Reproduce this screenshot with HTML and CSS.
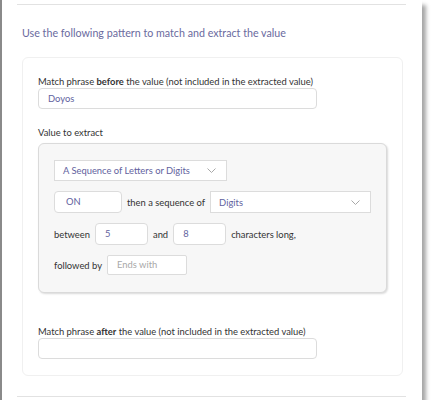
FILE: index.html
```html
<!DOCTYPE html>
<html lang="en">
<head>
    <meta charset="UTF-8">
    <meta name="viewport" content="width=device-width, initial-scale=1.0">
    <title>Extract Value Pattern</title>
    <link rel="stylesheet" href="styles.css">
</head>
<body>
    <div class="window">
        <div class="rule"></div>
        <h2 class="heading">Use the following pattern to match and extract the value</h2>
        <div class="card">
            <label class="field-label">Match phrase <b>before</b> the value (not included in the extracted value)</label>
            <div class="input wide">Doyos</div>

            <label class="field-label extract-label">Value to extract</label>
            <div class="extract-box">
                <div class="row">
                    <div class="select type-select">
                        <span>A Sequence of Letters or Digits</span>
                        <svg class="chevron" width="9" height="5" viewBox="0 0 9 5"><path d="M0.5 0.5 L4.5 4.5 L8.5 0.5" fill="none" stroke="#a8a8a8" stroke-width="1"/></svg>
                    </div>
                </div>
                <div class="row">
                    <div class="input tall prefix">ON</div>
                    <span class="row-text">then a sequence of</span>
                    <div class="select seq-select">
                        <span>Digits</span>
                        <svg class="chevron" width="9" height="5" viewBox="0 0 9 5"><path d="M0.5 0.5 L4.5 4.5 L8.5 0.5" fill="none" stroke="#a8a8a8" stroke-width="1"/></svg>
                    </div>
                </div>
                <div class="row">
                    <span class="row-text">between</span>
                    <div class="input tall num">5</div>
                    <span class="row-text">and</span>
                    <div class="input tall num">8</div>
                    <span class="row-text">characters long,</span>
                </div>
                <div class="row">
                    <span class="row-text">followed by</span>
                    <div class="input ends placeholder">Ends with</div>
                </div>
            </div>

            <label class="field-label after-label">Match phrase <b>after</b> the value (not included in the extracted value)</label>
            <div class="input wide"></div>
        </div>
        <div class="rule bottom"></div>
    </div>
</body>
</html>
```

FILE: styles.css
```css
body {
    margin: 0;
    background-color: #fff;
    font-family: Lato, 'Noto Sans', sans-serif;
    color: #333;
}

.window {
    width: 422px;
    height: 400px;
    border-left: 2px solid #8a8a8a;
    background-color: #fff;
    box-shadow: 4px 5px 4px rgba(0, 0, 0, 0.35);
    padding-top: 4px;
    box-sizing: border-box;
}

.rule {
    height: 1px;
    background-color: #e2e2e2;
    margin: 0 16px 0 15px;
}

.rule.bottom {
    margin-top: 20px;
}

.heading {
    margin: 19px 0 15px 20px;
    font-size: 10.7px;
    line-height: 18px;
    font-weight: normal;
    color: #6a6a9e;
    white-space: nowrap;
}

.card {
    margin-left: 20px;
    width: 381px;
    box-sizing: border-box;
    border: 1px solid #f0f0f0;
    border-radius: 6px;
    padding: 17px 16px 16px 15px;
}

.field-label {
    display: block;
    font-size: 9.4px;
    line-height: 13px;
    color: #333;
    white-space: nowrap;
}

.field-label b {
    font-weight: bold;
}

.extract-label {
    margin-top: 17px;
}

.after-label {
    margin-top: 32px;
}

.input {
    box-sizing: border-box;
    height: 21px;
    border: 1px solid #dcdcdc;
    border-radius: 4px;
    background-color: #fff;
    font-size: 9.4px;
    line-height: 19px;
    padding-left: 9px;
    color: #62629e;
    white-space: nowrap;
}

.input.wide {
    width: 279px;
}

.input.tall {
    height: 22px;
    line-height: 20px;
}

.input.prefix {
    width: 68px;
    padding-left: 11px;
}

.input.num {
    width: 53px;
}

.input.ends {
    width: 80px;
    height: 20px;
    line-height: 18px;
    border-radius: 2px;
}

.placeholder {
    color: #a8a8a8;
}

.extract-box {
    margin-top: 4px;
    width: 349px;
    box-sizing: border-box;
    background-color: #f7f7f7;
    border: 1px solid #dadada;
    border-radius: 6px;
    box-shadow: 1px 1px 2px rgba(0, 0, 0, 0.15);
    padding: 16px 15px 17px 15px;
    display: flex;
    flex-direction: column;
    gap: 10px;
}

.row {
    display: flex;
    align-items: center;
    gap: 5px;
}

.row-text {
    font-size: 9.4px;
    color: #333;
    white-space: nowrap;
}

.select {
    box-sizing: border-box;
    height: 21px;
    border: 1px solid #dcdcdc;
    background-color: #fff;
    display: flex;
    align-items: center;
    justify-content: space-between;
    padding: 0 10px 0 8px;
    font-size: 9.4px;
    color: #62629e;
    white-space: nowrap;
}

.type-select {
    width: 173px;
}

.seq-select {
    width: 161px;
    height: 22px;
}

.chevron {
    display: block;
}
```
